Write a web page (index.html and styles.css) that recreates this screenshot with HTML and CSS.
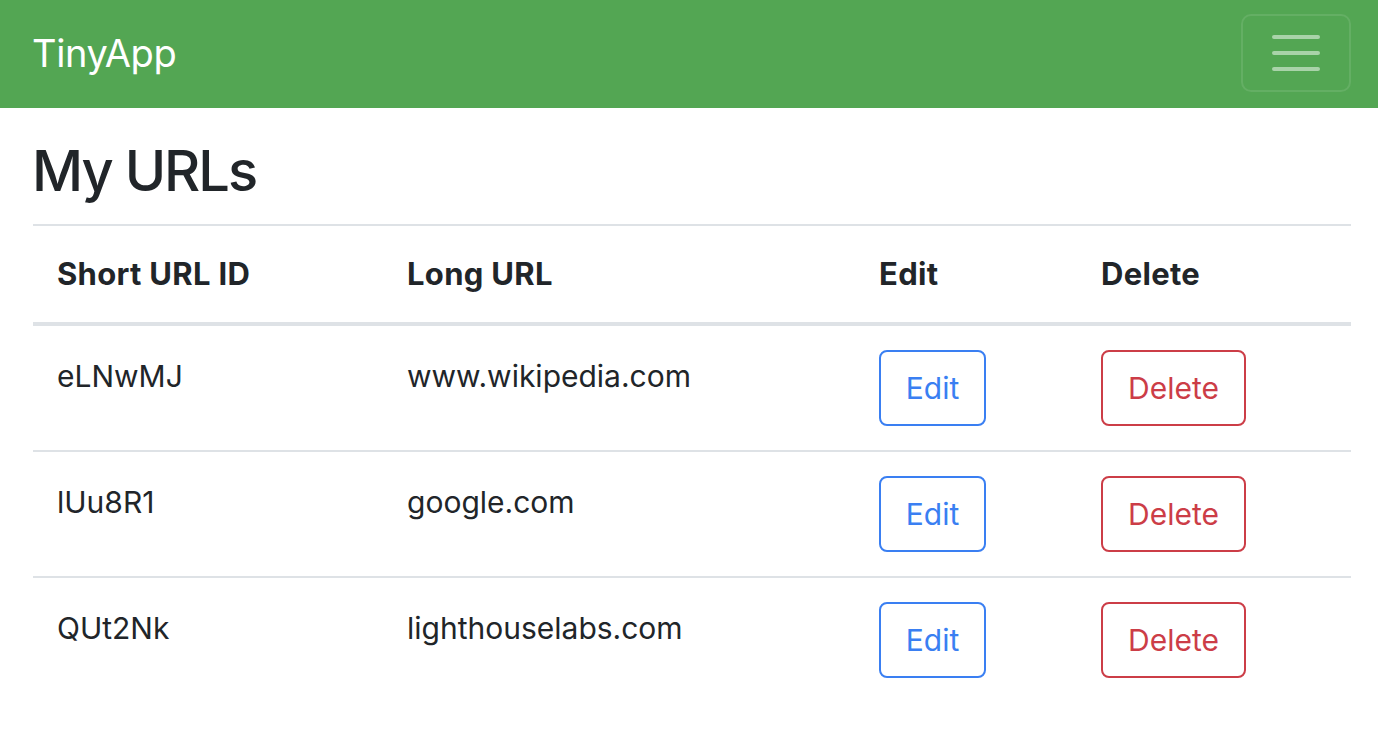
FILE: index.html
```html
<!DOCTYPE html>
<html>
<head>
<meta charset="utf-8">
<title>TinyApp</title>
<link rel="stylesheet" href="styles.css">
</head>
<body>
<nav class="navbar">
  <a class="brand" href="#">TinyApp</a>
  <button class="toggler" type="button" aria-label="Toggle navigation">
    <svg width="48" height="36" viewBox="0 0 48 36" aria-hidden="true">
      <path d="M2 2H46M2 18H46M2 34H46" stroke="rgba(255,255,255,0.5)" stroke-width="4" stroke-linecap="round"/>
    </svg>
  </button>
</nav>
<main class="container">
  <h2 class="title">My URLs</h2>
  <table class="table">
    <thead>
      <tr>
        <th class="c1">Short URL ID</th>
        <th class="c2">Long URL</th>
        <th class="c3">Edit</th>
        <th class="c4">Delete</th>
      </tr>
    </thead>
    <tbody>
      <tr>
        <td>eLNwMJ</td>
        <td>www.wikipedia.com</td>
        <td><button class="btn btn-edit">Edit</button></td>
        <td><button class="btn btn-delete">Delete</button></td>
      </tr>
      <tr>
        <td>lUu8R1</td>
        <td>google.com</td>
        <td><button class="btn btn-edit">Edit</button></td>
        <td><button class="btn btn-delete">Delete</button></td>
      </tr>
      <tr>
        <td>QUt2Nk</td>
        <td>lighthouselabs.com</td>
        <td><button class="btn btn-edit">Edit</button></td>
        <td><button class="btn btn-delete">Delete</button></td>
      </tr>
    </tbody>
  </table>
</main>
</body>
</html>
```

FILE: styles.css
```css
* { box-sizing: border-box; }
html, body { margin: 0; padding: 0; }
body {
  font-family: Inter, "Noto Sans", "Liberation Sans", sans-serif;
  color: #212529;
  background: #fff;
  font-size: 30px;
}
.navbar {
  height: 108px;
  background: #53a653;
  display: flex;
  align-items: center;
  justify-content: space-between;
  padding: 0 27px 0 33px;
}
.brand {
  color: #fff;
  text-decoration: none;
  font-size: 38px;
  letter-spacing: -0.4px;
  line-height: 1;
  margin-top: -2px;
  margin-left: -1px;
}
.toggler {
  width: 110px;
  height: 78px;
  margin-top: -2px;
  border: 2px solid rgba(255,255,255,0.1);
  border-radius: 10px;
  background: transparent;
  display: flex;
  align-items: center;
  justify-content: center;
  padding: 0;
}
.toggler svg { display: block; }
.container {
  padding: 0 27px 0 33px;
}
.title {
  font-size: 56px;
  font-weight: 500;
  line-height: 74px;
  margin: 26px 0 16px -1px;
  letter-spacing: -2px;
}
.table {
  width: 100%;
  border-collapse: collapse;
  table-layout: fixed;
}
.table th, .table td {
  padding: 24px;
  text-align: left;
  vertical-align: top;
  border-top: 2px solid #dee2e6;
}
.table td { line-height: 52px; }
.table th {
  font-weight: 700;
  font-size: 31px;
  letter-spacing: 0.3px;
  line-height: 48px;
}
.table thead th {
  border-bottom: 4px solid #dee2e6;
}
.c1 { width: 350px; }
.c2 { width: 472px; }
.c3 { width: 222px; }
.c4 { width: auto; }
.btn {
  font-family: inherit;
  font-size: 30px;
  line-height: 46px;
  height: 76px;
  padding: 0 24px;
  background: #fff;
  border: 2px solid;
  border-radius: 8px;
  display: block;
}
.btn-edit { color: #3a7ff2; border-color: #3a7ff2; width: 107px; }
.btn-delete { color: #cc3d47; border-color: #cc3d47; width: 145px; }
```
